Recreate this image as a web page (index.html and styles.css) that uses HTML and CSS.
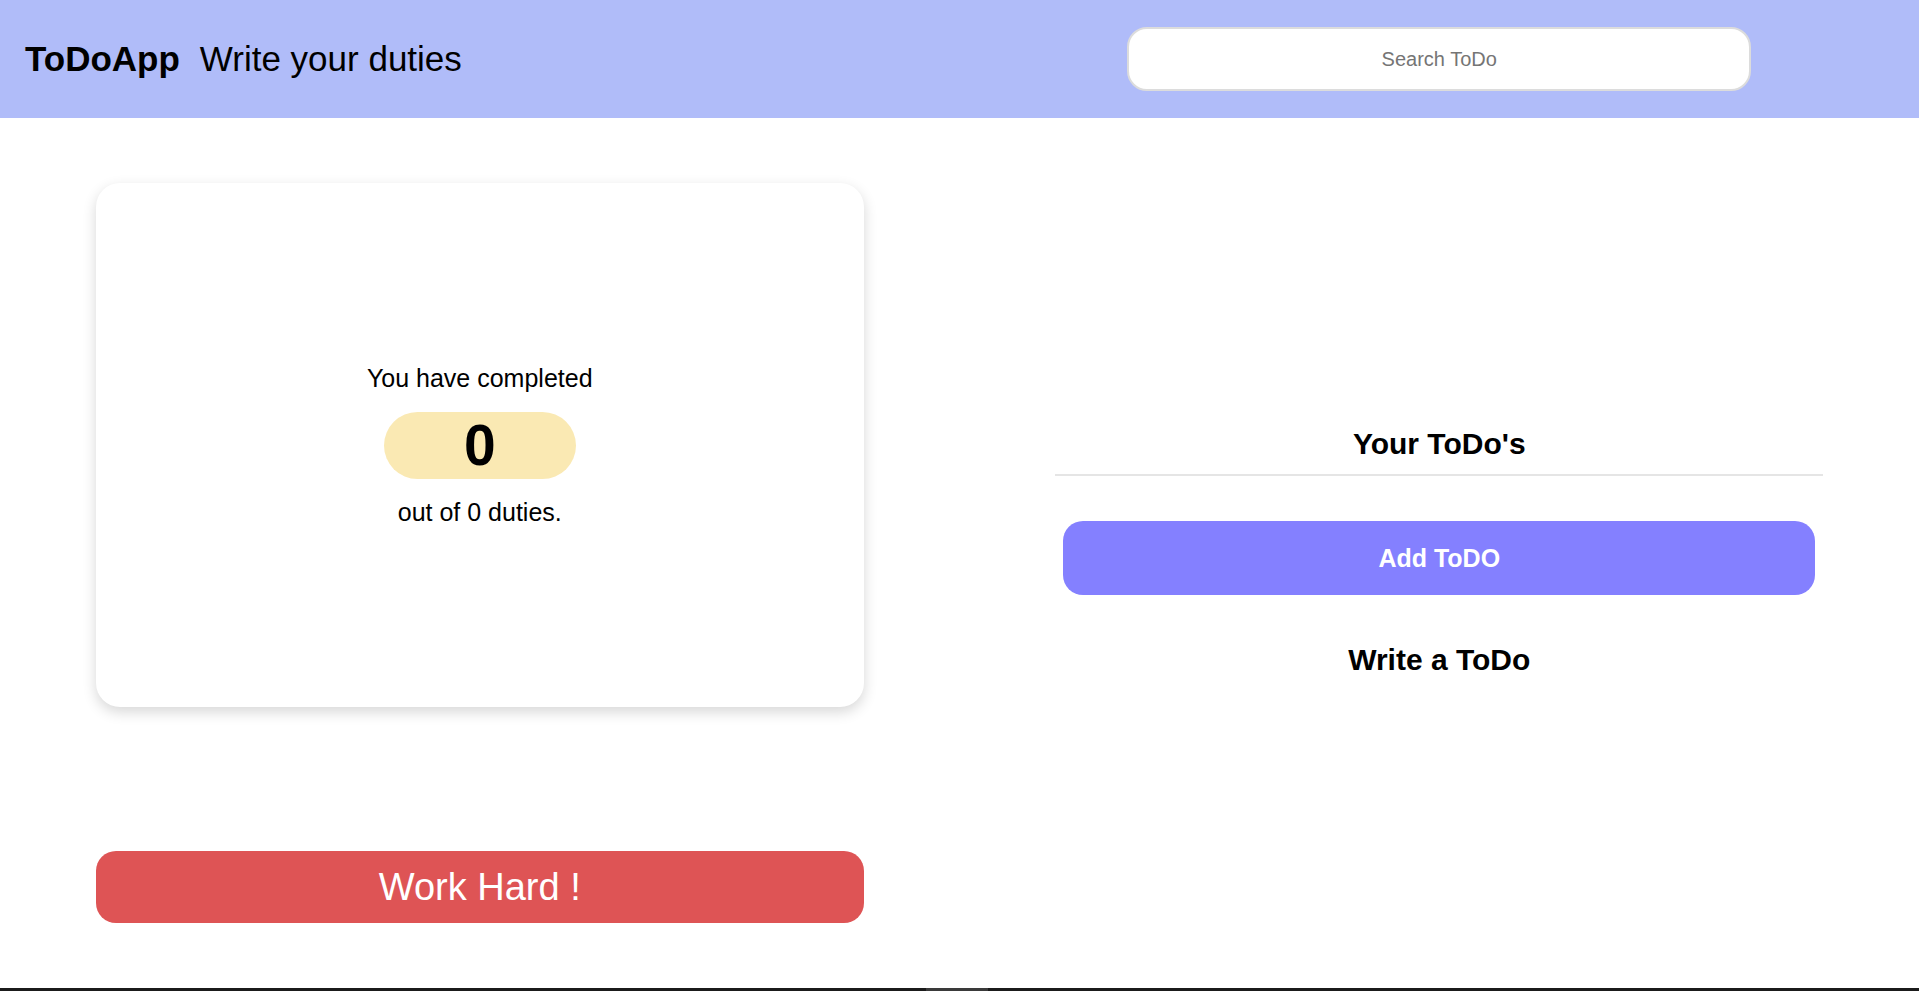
FILE: index.html
```html
<!DOCTYPE html>
<html lang="en">
<head>
<meta charset="utf-8">
<title>ToDoApp</title>
<link rel="stylesheet" href="styles.css">
</head>
<body>
  <header class="topbar">
    <div class="brand">
      <span class="brand-name">ToDoApp</span>
      <span class="brand-tag">Write your duties</span>
    </div>
    <div class="search-wrap">
      <input class="search" type="text" placeholder="Search ToDo">
    </div>
  </header>
  <main class="main">
    <section class="col col-left">
      <div class="card">
        <p class="card-text">You have completed</p>
        <div class="pill">0</div>
        <p class="card-text">out of 0 duties.</p>
      </div>
      <button class="work-btn">Work Hard !</button>
    </section>
    <section class="col col-right">
      <div class="todos">
        <h2 class="todos-title">Your ToDo's</h2>
        <hr class="divider">
        <button class="add-btn">Add ToDO</button>
        <h2 class="todos-sub">Write a ToDo</h2>
      </div>
    </section>
  </main>
  <div class="bottom-bar"><div class="bottom-seg"></div></div>
</body>
</html>
```
FILE: styles.css
```css
* { box-sizing: border-box; }
html, body { margin: 0; padding: 0; }
body {
  font-family: "Liberation Sans", Arial, sans-serif;
  color: #000;
  background: #fff;
  height: 991px;
  overflow: hidden;
}
.topbar {
  height: 118px;
  background: #b0bcf9;
  display: flex;
}
.brand {
  width: 50%;
  display: flex;
  align-items: center;
  gap: 20px;
  padding-left: 25px;
  font-size: 35px;
}
.brand-name { font-weight: bold; }
.search-wrap {
  width: 50%;
  display: flex;
  align-items: center;
  justify-content: center;
}
.search {
  width: 65%;
  height: 64px;
  border: 2px solid #dcdcdc;
  border-radius: 20px;
  background: #fff;
  text-align: center;
  font-family: "Liberation Sans", Arial, sans-serif;
  font-size: 20px;
  outline: none;
}
.search::placeholder { color: #757575; }
.main {
  height: 870px;
  display: flex;
}
.col {
  width: 50%;
  display: flex;
  flex-direction: column;
  align-items: center;
  justify-content: center;
}
.card {
  width: 80%;
  height: 524px;
  border-radius: 24px;
  background: #fff;
  box-shadow: 0 5px 14px rgba(0, 0, 0, 0.16);
  display: flex;
  flex-direction: column;
  align-items: center;
  justify-content: center;
}
.card-text {
  margin: 0;
  font-size: 25px;
}
.pill {
  margin: 19px 0;
  width: 192px;
  height: 67px;
  border-radius: 34px;
  background: #fae9b3;
  display: flex;
  align-items: center;
  justify-content: center;
  font-size: 57px;
  font-weight: bold;
}
.work-btn {
  margin-top: 144px;
  width: 80%;
  height: 72px;
  border: none;
  border-radius: 20px;
  background: #de5455;
  color: #fff;
  font-family: "Liberation Sans", Arial, sans-serif;
  font-size: 38px;
}
.col-right { padding-bottom: 2px; }
.todos {
  width: 80%;
  display: flex;
  flex-direction: column;
  align-items: center;
}
.todos-title, .todos-sub {
  margin: 0;
  font-size: 30px;
  font-weight: bold;
}
.divider {
  width: 100%;
  margin: 13px 0 0;
  border: none;
  height: 2px;
  background: #e5e5e5;
}
.add-btn {
  margin-top: 45px;
  width: calc(100% - 16px);
  height: 74px;
  border: none;
  border-radius: 20px;
  background: #8480ff;
  color: #fff;
  font-family: "Liberation Sans", Arial, sans-serif;
  font-size: 25px;
  font-weight: bold;
}
.todos-sub { margin-top: 48px; }
.bottom-bar {
  height: 3px;
  background: #1b1b1b;
  display: flex;
  padding-left: 926px;
}
.bottom-seg {
  width: 62px;
  background: #3a3a3a;
}
```
